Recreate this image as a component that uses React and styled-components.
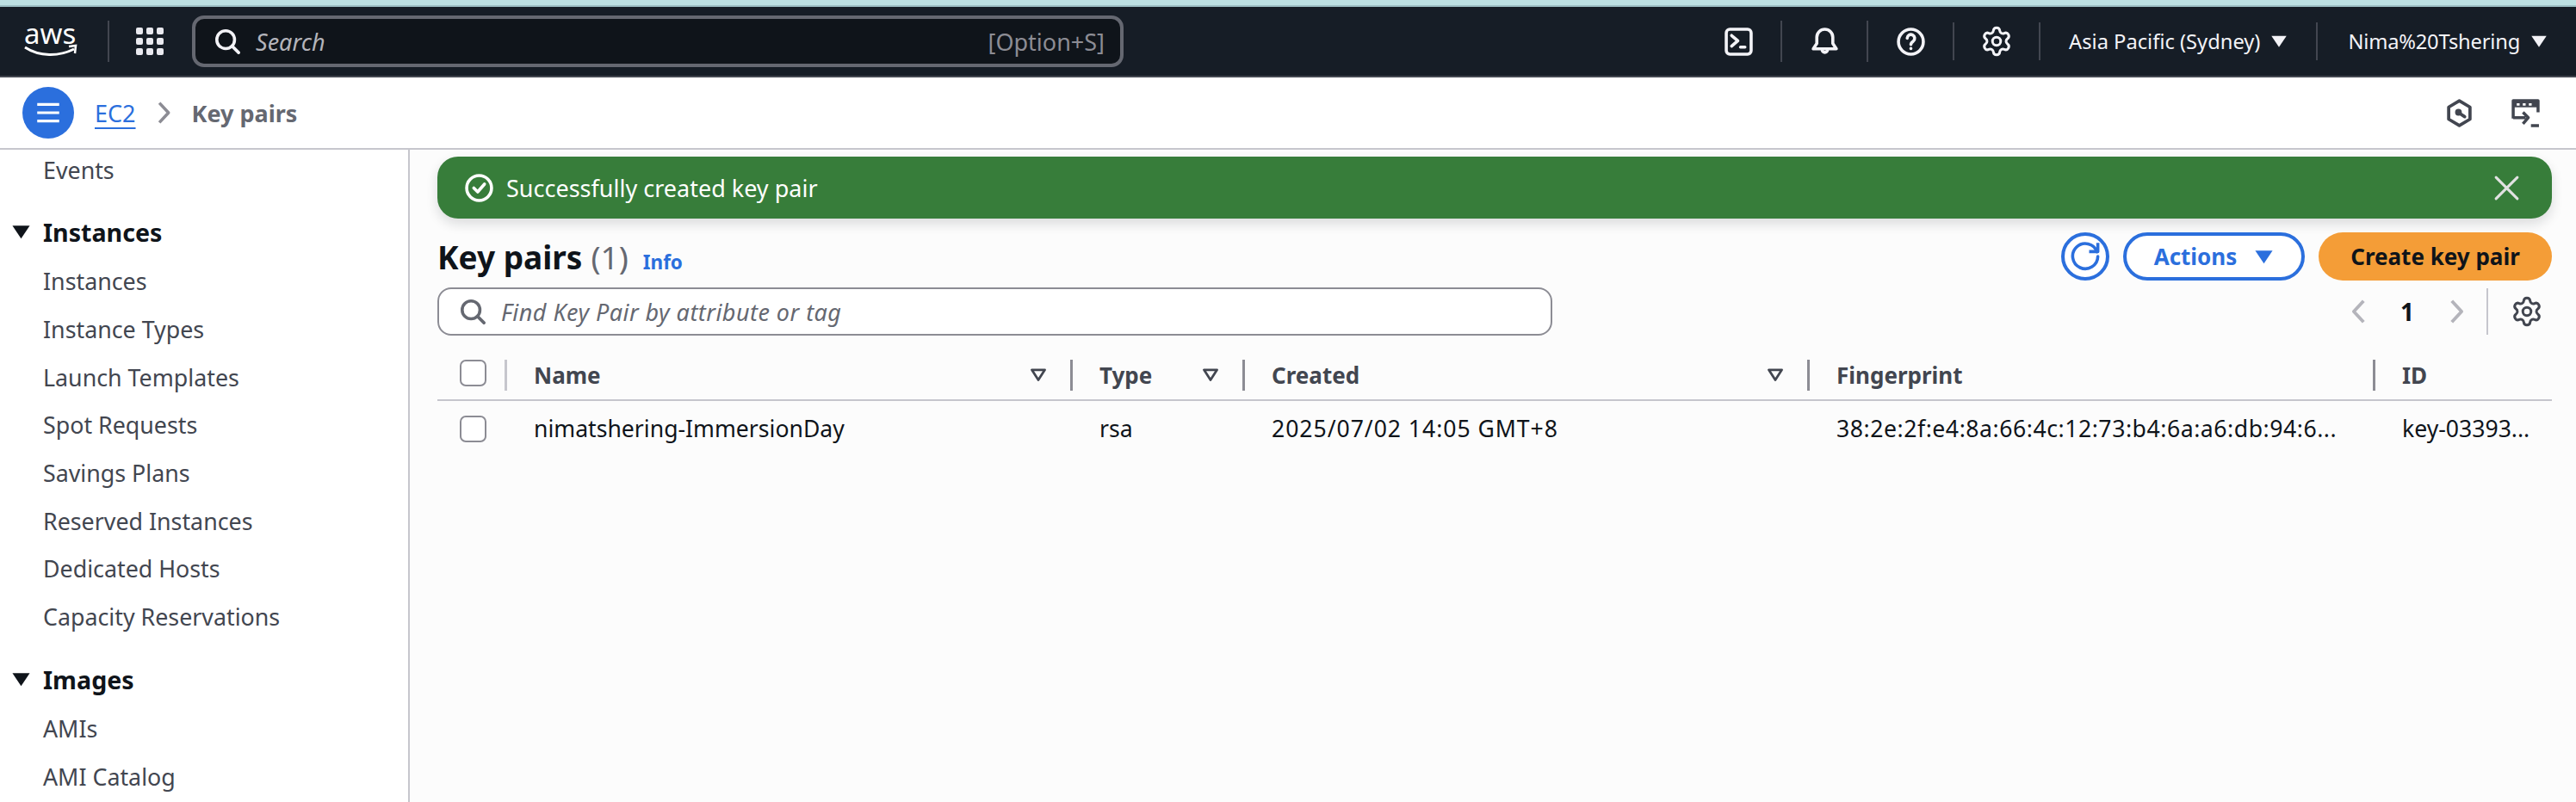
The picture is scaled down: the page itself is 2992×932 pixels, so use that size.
import styled, { createGlobalStyle } from "styled-components";
import { Settings } from "lucide-react";

const GlobalStyle = createGlobalStyle`
  html, body {
    margin: 0;
    padding: 0;
    height: 932px;
    overflow: hidden;
    background: #fcfcfc;
    font-family: "Noto Sans", "Open Sans", sans-serif;
    color: #0f141a;
  }
  * { box-sizing: border-box; }
`;

const Page = styled.div`
  display: flex;
  flex-direction: column;
  height: 932px;
  overflow: hidden;
`;

const TopStrip = styled.div`
  height: 8px;
  background: #bde0e2;
  border-bottom: 2px solid #9dbfc4;
`;

const Nav = styled.header`
  display: flex;
  align-items: center;
  height: 82px;
  padding-left: 28px;
  background: #161d26;
  border-bottom: 2px solid #424650;
  color: #f3f3f7;
`;

const NavSep = styled.span`
  width: 2px;
  height: ${(p) => (p.$short ? 44 : 48)}px;
  background: #424650;
`;

const Logo = styled.svg`
  display: block;
  width: 62px;
  height: 64px;
  margin-right: 35px;
`;

const Waffle = styled.div`
  display: grid;
  grid-template-columns: repeat(3, 8px);
  grid-auto-rows: 8px;
  gap: 4px;
  margin: 0 33px 0 31px;
`;

const WaffleDot = styled.span`
  background: #e9e9ef;
  border-radius: 2px;
`;

const TopSearch = styled.div`
  display: flex;
  align-items: center;
  width: 1082px;
  height: 60px;
  padding: 0 18px 0 22px;
  background: #0f141a;
  border: 4px solid #656871;
  border-radius: 14px;
`;

const TopSearchLabel = styled.span`
  margin-left: 18px;
  font-size: 27px;
  font-style: italic;
  color: #b4b4bb;
`;

const TopSearchHint = styled.span`
  margin-left: auto;
  font-size: 27px;
  color: #8c8c94;
`;

const NavRight = styled.div`
  display: flex;
  align-items: center;
  margin-left: auto;
`;

const NavIconCell = styled.span`
  display: flex;
  align-items: center;
  justify-content: center;
  width: 98px;
`;

const NavMenu = styled.span`
  display: flex;
  align-items: center;
  gap: 12px;
  padding: 0 33px 0 ${(p) => p.$left}px;
  font-size: 23.7px;
  letter-spacing: ${(p) => p.$spacing || 0}px;
  white-space: nowrap;
`;

const Icon = styled.svg`
  display: block;
  flex: none;
  width: ${(p) => p.$size}px;
  height: ${(p) => p.$size}px;
  fill: none;
  stroke: ${(p) => p.$color || "currentColor"};
  stroke-width: ${(p) => p.$stroke || 1.75};
  stroke-linecap: round;
  stroke-linejoin: round;
`;

const Caret = styled.svg`
  display: block;
  flex: none;
  width: ${(p) => p.$size}px;
  height: ${(p) => p.$size}px;
  fill: ${(p) => (p.$outline ? "none" : "currentColor")};
  stroke: ${(p) => (p.$outline ? "currentColor" : "none")};
  stroke-width: 2;
  stroke-linejoin: round;
`;

const CaretDown = ({ size, outline }) => (
  <Caret viewBox="0 0 16 16" $size={size} $outline={outline}>
    <path d={outline ? "M2.5 3.5h11L8 12z" : "M1 3h14l-7 10.4z"} />
  </Caret>
);

const ChevronRight = ({ size, color, stroke }) => (
  <Icon viewBox="0 0 16 16" $size={size} $color={color} $stroke={stroke}>
    <path d="M5 1l6.5 7L5 15" strokeLinecap="butt" />
  </Icon>
);

const ChevronLeft = ({ size, color, stroke }) => (
  <Icon viewBox="0 0 16 16" $size={size} $color={color} $stroke={stroke}>
    <path d="M11 1 4.5 8l6.5 7" strokeLinecap="butt" />
  </Icon>
);

const Breadcrumbs = styled.div`
  display: flex;
  align-items: center;
  height: 84px;
  padding: 0 42px 0 26px;
  background: #fff;
  border-bottom: 2px solid #c6c6cd;
`;

const MenuButton = styled.span`
  display: flex;
  align-items: center;
  justify-content: center;
  width: 60px;
  height: 60px;
  margin-right: 24px;
  border-radius: 50%;
  background: #2b6fdd;
  color: #fff;
`;

const CrumbLink = styled.a`
  font-size: 27px;
  color: #2b6fdd;
  text-decoration: underline;
  text-underline-offset: 6px;
  text-decoration-thickness: 2px;
`;

const CrumbCurrent = styled.span`
  font-size: 27px;
  font-weight: 700;
  color: #656871;
`;

const CrumbChevron = styled.span`
  display: flex;
  margin: 0 20px 0 19px;
`;

const CrumbTools = styled.div`
  display: flex;
  align-items: center;
  gap: 44px;
  margin-left: auto;
  color: #424650;
`;

const Body = styled.div`
  display: flex;
  flex: 1;
  min-height: 0;
`;

const Sidebar = styled.nav`
  flex: none;
  width: 476px;
  background: #fff;
  border-right: 2px solid #c6c6cd;
  overflow: hidden;
`;

const SideItem = styled.div`
  display: flex;
  align-items: center;
  height: ${(p) => p.$height || 55.7}px;
  padding-left: 50px;
  font-size: 26.8px;
  color: #424650;
`;

const SideSection = styled.div`
  margin-top: ${(p) => p.$gap}px;
`;

const SideHeading = styled.div`
  display: flex;
  align-items: center;
  gap: 14px;
  height: 55px;
  margin-bottom: 2px;
  padding-left: 13px;
  font-size: 28.6px;
  font-weight: 700;
  color: #0f141a;
`;

const Main = styled.main`
  flex: 1;
  min-width: 0;
  padding: 8px 28px 0 32px;
`;

const Flash = styled.div`
  display: flex;
  align-items: center;
  height: 72px;
  padding: 0 36px 0 32px;
  background: #377d3a;
  border-radius: 24px;
  color: #fff;
  font-size: 27px;
  box-shadow: 0 6px 14px rgba(15, 20, 26, 0.14);
`;

const FlashText = styled.span`
  margin-left: 15px;
`;

const FlashClose = styled.span`
  display: flex;
  margin-left: auto;
  color: #e2e2e2;
`;

const TitleRow = styled.div`
  display: flex;
  align-items: center;
  justify-content: space-between;
  height: 56px;
  margin-top: 16px;
`;

const Title = styled.h1`
  display: flex;
  align-items: baseline;
  margin: 0;
  font-size: 37px;
  font-weight: 700;
`;

const TitleCount = styled.span`
  margin-left: 10px;
  font-weight: 400;
  color: #656871;
`;

const InfoLink = styled.a`
  margin-left: 17px;
  font-size: 22.5px;
  font-weight: 700;
  color: #2b6fdd;
`;

const Actions = styled.div`
  display: flex;
  gap: 16px;
`;

const RefreshButton = styled.button`
  display: flex;
  align-items: center;
  justify-content: center;
  width: 56px;
  height: 56px;
  padding: 0;
  background: #fff;
  border: 4px solid #2b6fdd;
  border-radius: 50%;
  color: #2b6fdd;
`;

const PillButton = styled.button`
  display: flex;
  align-items: center;
  justify-content: center;
  gap: 20px;
  width: ${(p) => p.$width}px;
  height: 56px;
  padding: 0;
  font-family: inherit;
  font-size: 26px;
  font-weight: 700;
  white-space: nowrap;
  border-radius: 28px;
  background: ${(p) => (p.$primary ? "#f49d37" : "#fff")};
  color: ${(p) => (p.$primary ? "#0f141a" : "#2b6fdd")};
  border: ${(p) => (p.$primary ? "none" : "4px solid #2b6fdd")};
`;

const FilterRow = styled.div`
  display: flex;
  align-items: center;
  justify-content: space-between;
  margin-top: 8px;
`;

const FilterBox = styled.div`
  display: flex;
  align-items: center;
  width: 1295px;
  height: 56px;
  padding: 0 24px;
  background: #fff;
  border: 2px solid #8c8c94;
  border-radius: 16px;
  color: #656871;
`;

const FilterText = styled.span`
  margin-left: 18px;
  font-size: 27px;
  font-style: italic;
  letter-spacing: 0.45px;
`;

const Pager = styled.div`
  display: flex;
  align-items: center;
  padding-right: 10px;
`;

const PageNumber = styled.span`
  margin: 0 35px 0 34px;
  font-size: 28px;
  font-weight: 700;
`;

const PagerSep = styled.span`
  width: 2px;
  height: 54px;
  margin: 0 26px 0 21px;
  background: #c6c6cd;
`;

const Table = styled.div`
  margin-top: 28px;
  overflow: hidden;
`;

const columns = "78px 657px 200px 656px 657px 254px";

const HeadRow = styled.div`
  display: grid;
  grid-template-columns: ${columns};
  height: 48px;
  border-bottom: 2px solid #c6c6cd;
`;

const HeadCheck = styled.div`
  display: flex;
  padding-left: 26px;
`;

const HeadCell = styled.div`
  display: flex;
  align-items: center;
  justify-content: space-between;
  height: 36px;
  padding: 0 26px 0 31px;
  border-left: 3px solid ${(p) => (p.$light ? "#c6c6cd" : "#8c8c94")};
  font-size: 26px;
  font-weight: 700;
  color: #424650;
`;

const DataRow = styled.div`
  display: grid;
  grid-template-columns: ${columns};
  align-items: center;
  height: 64px;
`;

const DataCheck = styled.div`
  padding-left: 26px;
`;

const DataCell = styled.div`
  padding-left: 34px;
  font-size: 26.6px;
  letter-spacing: ${(p) => p.$spacing || 0}px;
  white-space: nowrap;
  overflow: hidden;
`;

const Checkbox = styled.span`
  display: block;
  width: 31px;
  height: 31px;
  background: #fff;
  border: 2px solid #8c8c94;
  border-radius: 7px;
`;

const sideGroups = [
  {
    title: "Instances",
    gap: 22,
    items: [
      "Instances",
      "Instance Types",
      "Launch Templates",
      "Spot Requests",
      "Savings Plans",
      "Reserved Instances",
      "Dedicated Hosts",
      "Capacity Reservations",
    ],
  },
  { title: "Images", gap: 17, items: ["AMIs", "AMI Catalog"] },
];

const headers = [
  { name: "Name", light: true, filter: true },
  { name: "Type", filter: true },
  { name: "Created", filter: true },
  { name: "Fingerprint" },
  { name: "ID", filter: true },
];

const SearchIcon = ({ size, stroke }) => (
  <Icon viewBox="0 0 16 16" $size={size} $stroke={stroke}>
    <circle cx="7" cy="7" r="5.5" />
    <path d="m15 15-4-4" />
  </Icon>
);

const App = () => {
  return (
    <Page>
      <GlobalStyle />
      <TopStrip />
      <Nav>
        <Logo viewBox="0 0 62 64">
          <text x="0" y="35" fontFamily="Noto Sans" fontSize="33" fill="#fff">
            aws
          </text>
          <path d="M1 39c17 11 39 11 57 2" fill="none" stroke="#fff" strokeWidth="3" />
          <path d="M52 38l8-1-1 9" fill="none" stroke="#fff" strokeWidth="2.5" />
        </Logo>
        <NavSep />
        <Waffle>
          {Array.from({ length: 9 }, (_, i) => (
            <WaffleDot key={i} />
          ))}
        </Waffle>
        <TopSearch>
          <SearchIcon size={30} stroke={1.9} />
          <TopSearchLabel>Search</TopSearchLabel>
          <TopSearchHint>[Option+S]</TopSearchHint>
        </TopSearch>
        <NavRight>
          <NavIconCell>
            <Icon viewBox="0 0 16 16" $size={33}>
              <rect x="1" y="1" width="14" height="14" rx="2" />
              <path d="m4 4.5 3.5 3L4 10.5M9 11h2.5" />
            </Icon>
          </NavIconCell>
          <NavSep />
          <NavIconCell>
            <Icon viewBox="0 0 16 16" $size={33}>
              <path d="M8 1a4.5 4.5 0 0 0-4.5 4.5V9l-2 3h13l-2-3V5.5A4.5 4.5 0 0 0 8 1z" />
              <path d="M6.5 12.5a1.5 1.5 0 0 0 3 0" />
            </Icon>
          </NavIconCell>
          <NavSep />
          <NavIconCell>
            <Icon viewBox="0 0 16 16" $size={33}>
              <circle cx="8" cy="8" r="7" />
              <path d="M5.9 6a2.1 2.1 0 1 1 3.4 1.7C8.4 8.3 8 8.8 8 9.6M8 11.8v.1" />
            </Icon>
          </NavIconCell>
          <NavSep $short />
          <NavIconCell>
            <Settings size={38} strokeWidth={1.9} />
          </NavIconCell>
          <NavSep $short />
          <NavMenu $left={33}>
            Asia Pacific (Sydney) <CaretDown size={20} />
          </NavMenu>
          <NavSep $short />
          <NavMenu $left={35} $spacing={-0.2}>
            Nima%20Tshering <CaretDown size={20} />
          </NavMenu>
        </NavRight>
      </Nav>
      <Breadcrumbs>
        <MenuButton>
          <Icon viewBox="0 0 16 16" $size={34} $stroke={1.5}>
            <path d="M2 3.5h12M2 8h12M2 12.5h12" strokeLinecap="butt" />
          </Icon>
        </MenuButton>
        <CrumbLink>EC2</CrumbLink>
        <CrumbChevron>
          <ChevronRight size={26} color="#8c8c94" stroke={2.2} />
        </CrumbChevron>
        <CrumbCurrent>Key pairs</CrumbCurrent>
        <CrumbTools>
          <Icon viewBox="0 0 16 16" $size={33} $stroke={1.8}>
            <path d="M8 1l6 3.6v6.8L8 15l-6-3.6V4.6z" />
            <circle cx="7.5" cy="7.5" r="1" fill="currentColor" />
            <path d="m8 8 3 2" />
          </Icon>
          <Icon viewBox="0 0 16 16" $size={33} $stroke={1.7}>
            <path d="M1 11V1h14v6.5" strokeLinecap="butt" />
            <path d="M1 3h14" strokeWidth="3.4" strokeLinecap="butt" />
            <path d="M3 3.1h1.6M6.4 3.1H8M9.8 3.1h1.6" stroke="#fff" strokeWidth="1.3" strokeLinecap="butt" />
            <path d="M1 10.5h7M6.5 7.5l3 3-3 3.5M11 15h4.5" strokeLinecap="butt" />
          </Icon>
        </CrumbTools>
      </Breadcrumbs>
      <Body>
        <Sidebar>
          <SideItem $height={46}>Events</SideItem>
          {sideGroups.map((group) => (
            <SideSection key={group.title} $gap={group.gap}>
              <SideHeading>
                <CaretDown size={23} />
                {group.title}
              </SideHeading>
              {group.items.map((item) => (
                <SideItem key={item}>{item}</SideItem>
              ))}
            </SideSection>
          ))}
        </Sidebar>
        <Main>
          <Flash>
            <Icon viewBox="0 0 16 16" $size={33}>
              <circle cx="8" cy="8" r="7" />
              <path d="m5 8 2.2 2.2L11 5.8" />
            </Icon>
            <FlashText>Successfully created key pair</FlashText>
            <FlashClose>
              <Icon viewBox="0 0 16 16" $size={33} $stroke={1.5}>
                <path d="m2 2 12 12M14 2 2 14" />
              </Icon>
            </FlashClose>
          </Flash>
          <TitleRow>
            <Title>
              Key pairs<TitleCount>(1)</TitleCount>
              <InfoLink>Info</InfoLink>
            </Title>
            <Actions>
              <RefreshButton>
                <Icon viewBox="0 0 16 16" $size={36} $stroke={1.6}>
                  <path d="M10 5.5h4.5V1" strokeLinecap="butt" />
                  <path d="M14.5 8a6.5 6.5 0 1 1-.4-2.4" />
                </Icon>
              </RefreshButton>
              <PillButton $width={211}>
                Actions <CaretDown size={23} />
              </PillButton>
              <PillButton $primary $width={271}>
                Create key pair
              </PillButton>
            </Actions>
          </TitleRow>
          <FilterRow>
            <FilterBox>
              <SearchIcon size={30} stroke={1.9} />
              <FilterText>Find Key Pair by attribute or tag</FilterText>
            </FilterBox>
            <Pager>
              <ChevronLeft size={28} color="#b4b4bb" stroke={2.2} />
              <PageNumber>1</PageNumber>
              <ChevronRight size={28} color="#b4b4bb" stroke={2.2} />
              <PagerSep />
              <Settings size={38} strokeWidth={1.9} color="#424650" />
            </Pager>
          </FilterRow>
          <Table>
            <HeadRow>
              <HeadCheck>
                <Checkbox />
              </HeadCheck>
              {headers.map((h) => (
                <HeadCell key={h.name} $light={h.light}>
                  {h.name}
                  {h.filter && <CaretDown size={22} outline />}
                </HeadCell>
              ))}
            </HeadRow>
            <DataRow>
              <DataCheck>
                <Checkbox />
              </DataCheck>
              <DataCell>nimatshering-ImmersionDay</DataCell>
              <DataCell>rsa</DataCell>
              <DataCell $spacing={0.95}>2025/07/02 14:05 GMT+8</DataCell>
              <DataCell $spacing={0.55}>38:2e:2f:e4:8a:66:4c:12:73:b4:6a:a6:db:94:6...</DataCell>
              <DataCell>key-03393...</DataCell>
            </DataRow>
          </Table>
        </Main>
      </Body>
    </Page>
  );
};

export default App;
